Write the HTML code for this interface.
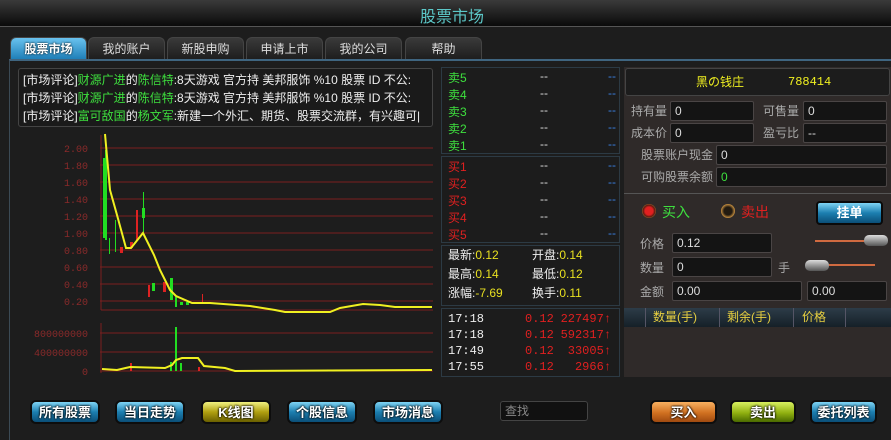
<!DOCTYPE html>
<html><head><meta charset="utf-8"><style>
*{margin:0;padding:0;box-sizing:border-box}
body{width:891px;height:440px;overflow:hidden;background:#1d1d1d;font-family:"Liberation Sans","Noto Sans CJK SC",sans-serif;font-size:12px;color:#ddd;position:relative}
.a{position:absolute}
.title{left:0;top:0;width:891px;height:27px;background:linear-gradient(#3a3a3a,#0a0a0a);border-bottom:1px solid #555}
.title span{position:absolute;left:420px;top:3px;font-size:16px;color:#5cc8c8}
.tab{top:37px;height:22px;width:77px;border-radius:6px 6px 0 0;background:linear-gradient(#3a3a3a,#1e1e1e);border:1px solid #444;border-bottom:none;text-align:center;line-height:22px;color:#ddd;font-size:12px}
.tab.on{background:linear-gradient(#69c2ee,#1f7fb8);color:#fff;font-weight:bold;text-shadow:0 0 2px #000}
.frame{left:9px;top:59px;width:882px;height:381px;border-left:1px solid #3b4a55;border-top:2px solid #3f6580}
.news{left:18px;top:68px;width:415px;height:59px;border:1px solid #444;border-radius:3px;background:#1a1a1a;padding:2px 0 0 4px;line-height:18px;font-size:12px;white-space:nowrap;overflow:hidden;color:#eee}
.g{color:#3ee03e}
.box{background:#1c1c1c;border:1px solid #2c3a44}
.row{position:absolute;left:6px;height:17px;width:172px;font-size:12px}
.row .p{position:absolute;left:92px;color:#ddd}
.row .v{position:absolute;right:4px;color:#3a7fe0}
.rp{left:624px;top:67px;width:267px;height:310px;background:#2f2a29}
.inp{position:absolute;background:#141414;border:1px solid #4a4545;border-radius:2px;color:#ddd;padding-left:4px;font-size:12px;line-height:18px;height:20px}
.lbl{position:absolute;color:#aaa;font-size:12px}
.btn{position:absolute;top:400px;height:24px;border-radius:6px;text-align:center;line-height:22px;color:#fff;font-size:13px;font-weight:bold;text-shadow:0 0 2px #000,0 0 2px #000;border:2px solid #0d0d0d}
.bb{width:70px;background:linear-gradient(#7fd4f4,#1c7fb0 50%,#0b4f78)}
</style></head><body>
<div class="a title"><span>股票市场</span></div>
<div class="a tab on" style="left:10px">股票市场</div>
<div class="a tab" style="left:88px">我的账户</div>
<div class="a tab" style="left:167px">新股申购</div>
<div class="a tab" style="left:246px">申请上市</div>
<div class="a tab" style="left:325px">我的公司</div>
<div class="a tab" style="left:405px">帮助</div>
<div class="a frame"></div>
<div class="a news">[市场评论]<span class="g">财源广进</span>的<span class="g">陈信特</span>:8天游戏 官方持 美邦服饰 %10 股票 ID 不公:<br>[市场评论]<span class="g">财源广进</span>的<span class="g">陈信特</span>:8天游戏 官方持 美邦服饰 %10 股票 ID 不公:<br>[市场评论]<span class="g">富可敌国</span>的<span class="g">杨文军</span>:新建一个外汇、期货、股票交流群，有兴趣可|</div>

<svg class="a" style="left:0;top:130px" width="440" height="250">
<g stroke="#7a2020" stroke-width="1">
<line x1="100" y1="18" x2="433" y2="18"/><line x1="100" y1="35" x2="433" y2="35"/><line x1="100" y1="52" x2="433" y2="52"/><line x1="100" y1="69" x2="433" y2="69"/><line x1="100" y1="86" x2="433" y2="86"/><line x1="100" y1="103" x2="433" y2="103"/><line x1="100" y1="120" x2="433" y2="120"/><line x1="100" y1="137" x2="433" y2="137"/><line x1="100" y1="154" x2="433" y2="154"/><line x1="100" y1="171" x2="433" y2="171"/>
<line x1="101" y1="5" x2="101" y2="180"/><line x1="101" y1="180" x2="433" y2="180"/>
<line x1="100" y1="203" x2="433" y2="203"/><line x1="100" y1="222" x2="433" y2="222"/><line x1="100" y1="241" x2="433" y2="241"/><line x1="101" y1="193" x2="101" y2="243"/>
</g>
<g fill="#8a2a2a" font-family="Liberation Mono,monospace" font-size="10" text-anchor="end">
<text x="88" y="22">2.00</text><text x="88" y="39">1.80</text><text x="88" y="56">1.60</text><text x="88" y="73">1.40</text><text x="88" y="90">1.20</text><text x="88" y="107">1.00</text><text x="88" y="124">0.80</text><text x="88" y="141">0.60</text><text x="88" y="158">0.40</text><text x="88" y="175">0.20</text>
<text x="88" y="207">800000000</text><text x="88" y="226">400000000</text><text x="88" y="245">0</text>
</g>
<g fill="#22dd22">
<rect x="103" y="28" width="2" height="80"/><rect x="105" y="20" width="2" height="90"/><rect x="109" y="108" width="1" height="16"/><rect x="115" y="90" width="1" height="32"/><rect x="142" y="78" width="3" height="10"/><rect x="143" y="62" width="1" height="40"/><rect x="152" y="153" width="3" height="8"/><rect x="170" y="148" width="3" height="22"/><rect x="175" y="167" width="2" height="10"/><rect x="180" y="172" width="3" height="3"/><rect x="186" y="172" width="3" height="3"/>
<rect x="175" y="197" width="2" height="44"/><rect x="170" y="232" width="2" height="9"/><rect x="180" y="233" width="2" height="8"/>
</g>
<g fill="#dd2222">
<rect x="120" y="117" width="3" height="6"/><rect x="130" y="112" width="3" height="6"/><rect x="136" y="80" width="2" height="30"/><rect x="148" y="155" width="2" height="12"/><rect x="163" y="152" width="3" height="10"/><rect x="202" y="164" width="1" height="8"/><rect x="130" y="233" width="2" height="8"/><rect x="198" y="237" width="2" height="4"/>
</g>
<polyline fill="none" stroke="#f0f020" stroke-width="2" points="105,4 110,60 117,85 126,118 131,118 143,103 154,125 160,140 170,160 176,166 192,173 210,173 250,176 275,180 285,182 330,182 340,178 363,174 380,175 395,177 432,177"/>
<polyline fill="none" stroke="#f0f020" stroke-width="2" points="102,239 117,240 130,237 165,238 172,235 176,230 182,228 198,228 204,236 225,238 235,241 432,240"/>
<line x1="10" y1="252" x2="891" y2="252" stroke="#3f6580" stroke-width="2"/>
</svg>

<div class="a box" style="left:441px;top:67px;width:179px;height:87px">
<div class="row" style="top:1px"><span style="color:#3ee03e">卖5</span><span class="p">--</span><span class="v">--</span></div>
<div class="row" style="top:18px"><span style="color:#3ee03e">卖4</span><span class="p">--</span><span class="v">--</span></div>
<div class="row" style="top:35px"><span style="color:#3ee03e">卖3</span><span class="p">--</span><span class="v">--</span></div>
<div class="row" style="top:52px"><span style="color:#3ee03e">卖2</span><span class="p">--</span><span class="v">--</span></div>
<div class="row" style="top:69px"><span style="color:#3ee03e">卖1</span><span class="p">--</span><span class="v">--</span></div>
</div>
<div class="a box" style="left:441px;top:156px;width:179px;height:87px">
<div class="row" style="top:1px"><span style="color:#e02020">买1</span><span class="p">--</span><span class="v">--</span></div>
<div class="row" style="top:18px"><span style="color:#e02020">买2</span><span class="p">--</span><span class="v">--</span></div>
<div class="row" style="top:35px"><span style="color:#e02020">买3</span><span class="p">--</span><span class="v">--</span></div>
<div class="row" style="top:52px"><span style="color:#e02020">买4</span><span class="p">--</span><span class="v">--</span></div>
<div class="row" style="top:69px"><span style="color:#e02020">买5</span><span class="p">--</span><span class="v">--</span></div>
</div>
<div class="a box" style="left:441px;top:245px;width:179px;height:61px;line-height:19px;padding:0 0 0 6px;color:#eee">
<div>最新:<span style="color:#e8e020">0.12</span><span class="a" style="left:90px">开盘:<span style="color:#e8e020">0.14</span></span></div>
<div>最高:<span style="color:#e8e020">0.14</span><span class="a" style="left:90px">最低:<span style="color:#e8e020">0.12</span></span></div>
<div>涨幅:<span style="color:#e8e020">-7.69</span><span class="a" style="left:90px">换手:<span style="color:#e8e020">0.11</span></span></div>
</div>
<div class="a box" style="left:441px;top:308px;width:179px;height:69px;font-family:'Liberation Mono',monospace;font-size:12px;line-height:16px;padding-top:2px">
<div style="position:relative;height:16px"><span class="a" style="left:6px;color:#eee">17:18</span><span class="a" style="left:83px;color:#e02020">0.12</span><span class="a" style="right:8px;color:#e02020">227497↑</span></div>
<div style="position:relative;height:16px"><span class="a" style="left:6px;color:#eee">17:18</span><span class="a" style="left:83px;color:#e02020">0.12</span><span class="a" style="right:8px;color:#e02020">592317↑</span></div>
<div style="position:relative;height:16px"><span class="a" style="left:6px;color:#eee">17:49</span><span class="a" style="left:83px;color:#e02020">0.12</span><span class="a" style="right:8px;color:#e02020">33005↑</span></div>
<div style="position:relative;height:16px"><span class="a" style="left:6px;color:#eee">17:55</span><span class="a" style="left:83px;color:#e02020">0.12</span><span class="a" style="right:8px;color:#e02020">2966↑</span></div>
</div>

<div class="a rp">
<div class="a" style="left:1px;top:1px;width:265px;height:28px;background:#1c1c1c;border:1px solid #444;border-radius:3px;color:#f0f020;font-size:12px;line-height:26px"><span class="a" style="left:70px">黑の钱庄</span><span class="a" style="left:162px;font-family:'Liberation Mono',monospace">788414</span></div>
<span class="lbl" style="left:7px;top:35px">持有量</span><div class="inp" style="left:46px;top:34px;width:84px">0</div>
<span class="lbl" style="left:139px;top:35px">可售量</span><div class="inp" style="left:179px;top:34px;width:84px">0</div>
<span class="lbl" style="left:7px;top:57px">成本价</span><div class="inp" style="left:46px;top:56px;width:84px">0</div>
<span class="lbl" style="left:139px;top:57px">盈亏比</span><div class="inp" style="left:179px;top:56px;width:84px">--</div>
<span class="lbl" style="left:17px;top:79px">股票账户现金</span><div class="inp" style="left:92px;top:78px;width:171px">0</div>
<span class="lbl" style="left:17px;top:101px">可购股票余额</span><div class="inp" style="left:92px;top:100px;width:171px;color:#3ee03e">0</div>
<div class="a" style="left:0;top:126px;width:267px;height:1px;background:#555"></div>
<div class="a" style="left:18px;top:137px;width:14px;height:14px;border-radius:50%;background:radial-gradient(#e02020 40%,#5a1a10 60%,#c89040 80%)"></div>
<span class="a" style="left:38px;top:135px;color:#3ee03e;font-size:14px">买入</span>
<div class="a" style="left:97px;top:137px;width:14px;height:14px;border-radius:50%;background:radial-gradient(#221a10 40%,#c89040 70%)"></div>
<span class="a" style="left:117px;top:135px;color:#e02020;font-size:14px">卖出</span>
<div class="a" style="left:192px;top:134px;width:67px;height:24px;border-radius:4px;border:2px solid #0a0a0a;background:linear-gradient(#7fd4f4,#1c7fb0 50%,#0b4f78);color:#fff;font-weight:bold;text-align:center;line-height:20px;font-size:13px">挂单</div>
<span class="lbl" style="left:16px;top:168px">价格</span><div class="inp" style="left:48px;top:166px;width:100px">0.12</div>
<div class="a" style="left:191px;top:173px;width:50px;height:2px;background:#d06a40"></div>
<div class="a" style="left:240px;top:168px;width:24px;height:11px;border-radius:5px;background:linear-gradient(#ddd,#555)"></div>
<span class="lbl" style="left:16px;top:192px">数量</span><div class="inp" style="left:48px;top:190px;width:100px">0</div>
<span class="lbl" style="left:154px;top:192px">手</span>
<div class="a" style="left:195px;top:197px;width:56px;height:2px;background:#d06a40"></div>
<div class="a" style="left:181px;top:193px;width:24px;height:11px;border-radius:5px;background:linear-gradient(#ddd,#555)"></div>
<span class="lbl" style="left:16px;top:216px">金额</span><div class="inp" style="left:48px;top:214px;width:130px">0.00</div>
<div class="inp" style="left:183px;top:214px;width:80px">0.00</div>
<div class="a" style="left:0;top:241px;width:267px;height:19px;background:linear-gradient(#2d3c48,#152028);color:#e8d040;line-height:19px;font-size:12px">
<span class="a" style="left:21px;top:0;height:19px;border-left:1px solid #556"></span><span class="a" style="left:29px">数量(手)</span>
<span class="a" style="left:95px;top:0;height:19px;border-left:1px solid #556"></span><span class="a" style="left:103px">剩余(手)</span>
<span class="a" style="left:169px;top:0;height:19px;border-left:1px solid #556"></span><span class="a" style="left:178px">价格</span>
<span class="a" style="left:221px;top:0;height:19px;border-left:1px solid #556"></span>
</div>
</div>

<div class="btn bb" style="left:30px">所有股票</div>
<div class="btn bb" style="left:115px">当日走势</div>
<div class="btn" style="left:201px;width:70px;background:linear-gradient(#f0f080,#b0a010 50%,#6a6000)">K线图</div>
<div class="btn bb" style="left:287px">个股信息</div>
<div class="btn bb" style="left:373px">市场消息</div>
<div class="a" style="left:500px;top:401px;width:88px;height:20px;background:#111;border:1px solid #444;border-radius:3px;color:#888;padding-left:4px;line-height:18px">查找</div>
<div class="btn" style="left:650px;width:67px;background:linear-gradient(#f8b060,#d07020 55%,#a04a10)">买入</div>
<div class="btn" style="left:730px;width:66px;background:linear-gradient(#d8f060,#90b010 55%,#4a6a00)">卖出</div>
<div class="btn" style="left:810px;width:67px;background:linear-gradient(#7fd4f4,#1c7fb0 50%,#0b4f78)">委托列表</div>
</body></html>
